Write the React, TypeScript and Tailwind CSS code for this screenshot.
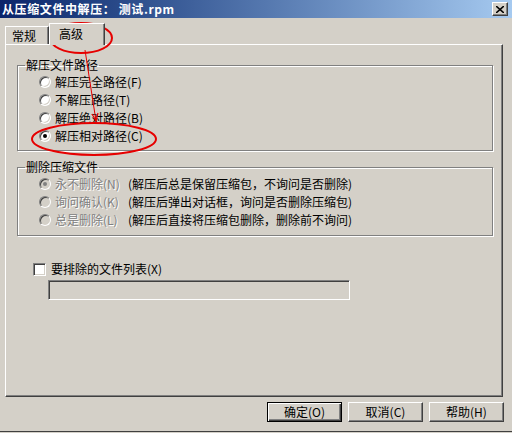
import React from 'react';

const font = "font-['SimSun','Noto_Sans_CJK_SC',sans-serif]";

const pathOptions = [
  { label: '解压完全路径', key: 'F' },
  { label: '不解压路径', key: 'T' },
  { label: '解压绝对路径', key: 'B' },
  { label: '解压相对路径', key: 'C', checked: true },
];

const deleteOptions = [
  { label: '永不删除', key: 'N', desc: '(解压后总是保留压缩包，不询问是否删除)', checked: true },
  { label: '询问确认', key: 'K', desc: '(解压后弹出对话框，询问是否删除压缩包)' },
  { label: '总是删除', key: 'L', desc: '(解压后直接将压缩包删除，删除前不询问)' },
];

function Radio({ checked, disabled }: { checked?: boolean; disabled?: boolean }) {
  return (
    <span
      className={`w-[12px] h-[12px] rounded-full flex items-center justify-center shrink-0 border border-t-[#808080] border-l-[#808080] border-b-white border-r-white shadow-[inset_1px_1px_#404040,inset_-1px_-1px_#d4d0c8] ${
        disabled ? 'bg-[#d4d0c8]' : 'bg-white'
      }`}
    >
      {checked && (
        <span className={`w-[4px] h-[4px] rounded-full ${disabled ? 'bg-[#808080]' : 'bg-black'}`} />
      )}
    </span>
  );
}

function Button({ children, isDefault }: { children: React.ReactNode; isDefault?: boolean }) {
  return (
    <button
      className={`w-[75px] h-[20px] bg-[#d4d0c8] text-[12px] text-black flex items-center justify-center ${
        isDefault
          ? 'border border-black shadow-[inset_1px_1px_#fff,inset_-1px_-1px_#404040,inset_-2px_-2px_#808080]'
          : 'border border-t-white border-l-white border-b-[#404040] border-r-[#404040] shadow-[inset_-1px_-1px_#808080]'
      }`}
    >
      {children}
    </button>
  );
}

export default function App() {
  return (
    <div className={`relative w-[512px] h-[433px] bg-[#d4d0c8] text-black text-[12px] leading-[16px] overflow-hidden ${font}`}>
      {/* title bar */}
      <div className="h-[18px] flex items-center justify-between bg-gradient-to-r from-[#0a246a] to-[#a6caf0] pl-[2px] pr-[4px]">
        <span className="text-white font-bold text-[12px] tracking-[0.6px]">从压缩文件中解压： 测试.rpm</span>
        <span className="w-[16px] h-[14px] bg-[#d4d0c8] border border-t-white border-l-white border-b-[#404040] border-r-[#404040] shadow-[inset_-1px_-1px_#808080] flex items-center justify-center">
          <svg width="8" height="7" viewBox="0 0 8 7">
            <path d="M0 0 L8 7 M8 0 L0 7" stroke="#000" strokeWidth="1.6" />
          </svg>
        </span>
      </div>

      {/* tabs */}
      <div className="h-[26px] flex items-end pl-[5px]">
        <div className="w-[44px] h-[18px] border-t border-l border-white border-r border-r-[#404040] shadow-[inset_-1px_0_#808080] flex items-center pl-[6px]">
          常规
        </div>
        <div className="relative z-10 w-[56px] h-[22px] -mb-px bg-[#d4d0c8] border-t border-l border-white border-r border-r-[#404040] shadow-[inset_-1px_0_#808080] flex items-start pt-[2px] pl-[9px]">
          高级
        </div>
      </div>

      {/* page */}
      <div className="mx-[5px] w-[498px] h-[353px] border border-white border-r-[#404040] border-b-[#404040] shadow-[inset_-1px_-1px_#808080] flex flex-col">
        <fieldset className="mt-[12px] ml-[11px] mr-[9px] border border-[#808080] shadow-[inset_1px_1px_#fff,1px_1px_#fff] pb-[5px]">
          <legend className="ml-[7px] px-[1px]">解压文件路径</legend>
          {pathOptions.map((o) => (
            <div key={o.key} className="h-[18px] flex items-center pl-[21px] gap-[4px]">
              <Radio checked={o.checked} />
              <span>
                {o.label}({o.key})
              </span>
            </div>
          ))}
        </fieldset>

        <fieldset className="mt-[8px] ml-[11px] mr-[9px] border border-[#808080] shadow-[inset_1px_1px_#fff,1px_1px_#fff] pb-[6px]">
          <legend className="ml-[7px] px-[1px]">删除压缩文件</legend>
          {deleteOptions.map((o) => (
            <div key={o.key} className="h-[18px] flex items-center pl-[21px]">
              <Radio checked={o.checked} disabled />
              <span className="w-[77px] pl-[4px] text-[#808080] [text-shadow:1px_1px_#fff]">
                {o.label}({o.key})
              </span>
              <span>{o.desc}</span>
            </div>
          ))}
        </fieldset>

        <div className="mt-[25px] ml-[27px] h-[16px] flex items-center gap-[5px]">
          <span className="w-[13px] h-[13px] bg-white border border-t-[#808080] border-l-[#808080] border-b-white border-r-white shadow-[inset_1px_1px_#404040,inset_-1px_-1px_#d4d0c8]" />
          <span>要排除的文件列表(X)</span>
        </div>
        <div className="mt-[3px] ml-[42px] w-[302px] h-[20px] bg-[#d4d0c8] border border-t-[#808080] border-l-[#808080] border-b-white border-r-white shadow-[inset_1px_1px_#404040,inset_-1px_-1px_#d4d0c8]" />
      </div>

      {/* buttons */}
      <div className="mt-[5px] flex justify-end gap-[6px] pr-[8px]">
        <Button isDefault>确定(O)</Button>
        <Button>取消(C)</Button>
        <Button>帮助(H)</Button>
      </div>

      <div className="absolute left-0 right-0 bottom-[1px] h-px bg-[#404040]" />

      {/* red annotations */}
      <svg className="absolute inset-0 pointer-events-none" width="512" height="433" viewBox="0 0 512 433">
        <ellipse cx="81" cy="38" rx="31" ry="15" fill="none" stroke="#e60000" strokeWidth="2" />
        <ellipse cx="94" cy="139" rx="62" ry="16" fill="none" stroke="#e60000" strokeWidth="2" />
        <path d="M85 50 L96 121" stroke="#e60000" strokeWidth="1" fill="none" />
        <path d="M92 114 L96 121 L98 113" stroke="#e60000" strokeWidth="1.2" fill="none" />
      </svg>
    </div>
  );
}
